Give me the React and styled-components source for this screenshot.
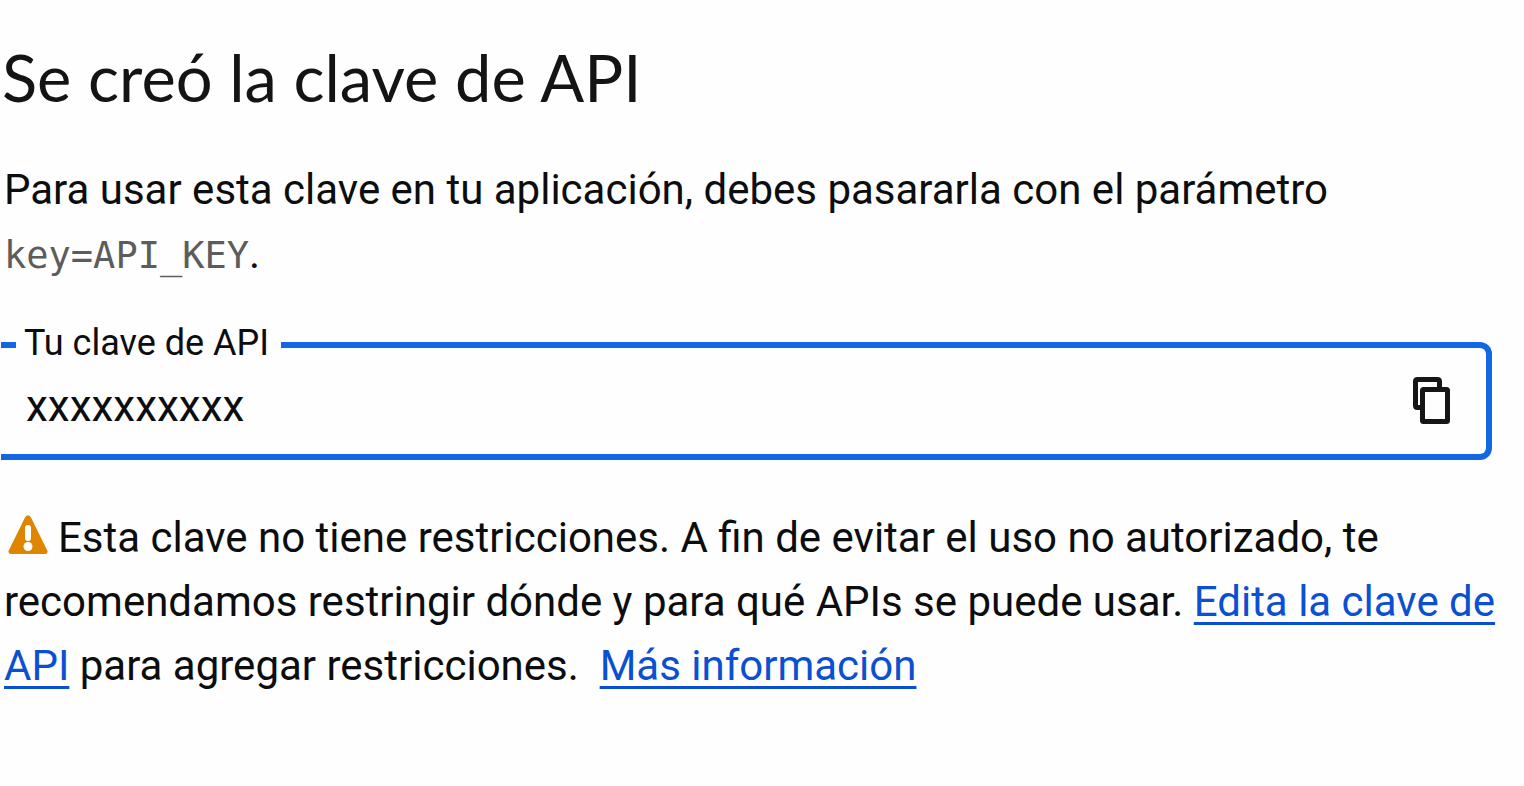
import React from "react";
import styled, { createGlobalStyle } from "styled-components";

const GlobalStyle = createGlobalStyle`
  *, *::before, *::after { box-sizing: border-box; }
  body {
    margin: 0;
    background: #fefefe;
    color: #0c0d0e;
    font-family: Roboto, "Liberation Sans", sans-serif;
  }
`;

const Dialog = styled.main`
  padding: 40px 24px 40px 0;
`;

const Title = styled.h1`
  margin: 0 0 44px;
  padding-left: 2px;
  font-family: Lato, "Open Sans", sans-serif;
  font-size: 65px;
  font-weight: 400;
  line-height: 74px;
  color: #141414;
`;

const Text = styled.p`
  margin: 0;
  padding-left: 4px;
  font-size: 42px;
  line-height: 64px;
`;

const Code = styled.code`
  font-family: "DejaVu Sans Mono", monospace;
  font-size: 37px;
  line-height: 37px;
  color: #5c5c5c;
`;

const Field = styled.div`
  position: relative;
  display: flex;
  align-items: center;
  margin: 56px 8px 46px 1px;
  padding: 0 28px 0 25px;
  height: 118px;
  border: 6px solid #1268e4;
  border-left: 0;
  border-radius: 0 12px 12px 0;
`;

const Label = styled.label`
  position: absolute;
  top: -29px;
  left: 15px;
  padding: 0 12px 0 8px;
  background: #fefefe;
  font-size: 36px;
  line-height: 48px;
`;

const KeyInput = styled.input`
  flex: 1;
  min-width: 0;
  padding: 10px 0 0;
  border: 0;
  outline: 0;
  background: transparent;
  color: inherit;
  font: inherit;
  font-size: 44px;
  line-height: 64px;
`;

const CopyButton = styled.button`
  display: flex;
  padding: 0;
  border: 0;
  background: transparent;
  color: #161616;
  cursor: pointer;
`;

const WarningIcon = styled.svg`
  width: 40px;
  height: 40px;
  margin: 0 10px 0 4px;
  vertical-align: -3px;
`;

const Link = styled.a`
  color: #0b50d0;
  text-decoration: underline;
  text-decoration-thickness: 3px;
  text-underline-offset: 6px;
  text-decoration-skip-ink: none;
`;

export default function App() {
  return (
    <>
      <GlobalStyle />
      <Dialog>
        <Title>Se creó la clave de API</Title>
        <Text>
          Para usar esta clave en tu aplicación, debes pasararla con el parámetro <Code>key=API_KEY</Code>.
        </Text>
        <Field>
          <Label htmlFor="api-key">Tu clave de API</Label>
          <KeyInput id="api-key" type="text" readOnly value="xxxxxxxxxx" />
          <CopyButton type="button" aria-label="Copiar">
            <svg width="52" height="52" viewBox="0 0 52 52" fill="none" stroke="currentColor" strokeWidth="5" strokeLinejoin="round" aria-hidden="true">
              <path d="M33.500 14V6.500Q33.500 4.500 31.500 4.500H11.500Q9.500 4.500 9.500 6.500V30.500Q9.500 32.500 11.500 32.500H15" />
              <rect x="16.500" y="14.500" width="25" height="32" rx="1" />
            </svg>
          </CopyButton>
        </Field>
        <Text>
          <WarningIcon viewBox="0 0 40 40" aria-hidden="true">
            <path d="M17 2.500Q20-2 23 2.500L39.500 36Q40 39 37 39H3Q0 39 .5 36Z" fill="#df8600" />
            <rect x="17" y="10" width="6" height="16" rx="3" fill="#fff" />
            <circle cx="20" cy="31.500" r="4.500" fill="#fff" />
          </WarningIcon>
          Esta clave no tiene restricciones. A fin de evitar el uso no autorizado, te recomendamos restringir dónde y para qué APIs se puede usar. <Link href="#editar">Edita la clave de API</Link> para agregar restricciones.&nbsp; <Link href="#informacion">Más información</Link>
        </Text>
      </Dialog>
    </>
  );
}
